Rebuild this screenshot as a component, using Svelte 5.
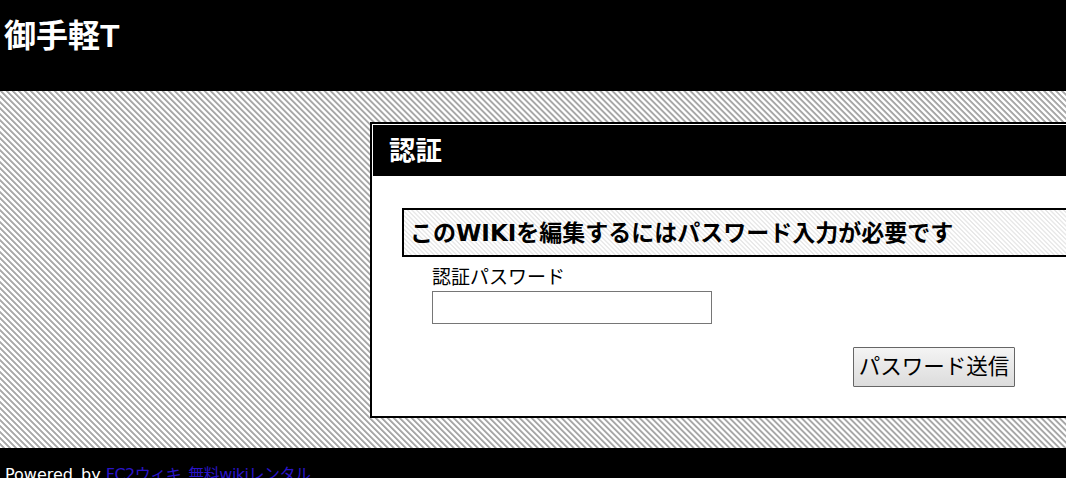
<script lang="ts">
	let password = $state('');
</script>

<div class="page">
	<header class="site-header">
		<h1>御手軽T</h1>
	</header>

	<main class="content">
		<section class="auth-box">
			<h2>認証</h2>
			<form class="auth-body" onsubmit={(e) => e.preventDefault()}>
				<h3>このWIKIを編集するにはパスワード入力が必要です</h3>
				<div class="field">
					<label for="auth-pass">認証パスワード</label>
					<input id="auth-pass" type="password" bind:value={password} />
				</div>
				<div class="actions">
					<button type="submit">パスワード送信</button>
				</div>
			</form>
		</section>
	</main>

	<footer class="site-footer">
		<span class="powered">Powered by</span>
		<a href="#top">FC2ウィキ</a>
		<a href="#top">無料wikiレンタル</a>
	</footer>
</div>

<style>
	:global(body) {
		overflow: hidden;
	}

	.page {
		width: 1066px;
		height: 478px;
		overflow: hidden;
		font-family: "Liberation Sans", "Noto Sans CJK JP", sans-serif;
		color: #000;
	}

	.site-header {
		height: 91px;
		background: #000;
		color: #fff;
		padding: 14px 0 0 4px;
		box-sizing: border-box;
	}

	h1 {
		margin: 0;
		font-size: 32px;
		line-height: 44px;
		font-weight: bold;
	}

	.content {
		height: 357px;
		box-sizing: border-box;
		padding: 31px 0 0 370px;
		background: repeating-linear-gradient(45deg, #fff 0, #fff 1.5px, #a8a8a8 2.3px, #a8a8a8 3.4px, #fff 4.24px);
		overflow: hidden;
	}

	.auth-box {
		width: 900px;
		height: 296px;
		box-sizing: border-box;
		border: 2px solid #000;
		padding: 1px;
		background: #fff;
	}

	h2 {
		margin: 0;
		height: 51px;
		background: #000;
		color: #fff;
		font-size: 26.5px;
		line-height: 53px;
		padding-left: 16px;
	}

	.auth-body {
		padding: 32px 0 0 29px;
	}

	h3 {
		margin: 0;
		height: 49px;
		box-sizing: border-box;
		border: 2px solid #000;
		padding-left: 6px;
		font-family: "DejaVu Sans", "Noto Sans CJK JP", sans-serif;
		font-size: 23px;
		line-height: 47px;
		background: repeating-linear-gradient(45deg, #fff 0, #fff 1.2px, #e8e8e8 1.8px, #e8e8e8 2.6px, #fff 3.2px);
	}

	.field {
		padding: 8px 0 0 30px;
	}

	label {
		display: block;
		font-size: 19px;
		line-height: 26px;
	}

	input {
		display: block;
		width: 280px;
		height: 33px;
		box-sizing: border-box;
		border: 1px solid #767676;
		padding: 0 4px;
		background: #fff;
		margin: 0;
	}

	.actions {
		padding: 23px 0 0 451px;
	}

	button {
		display: block;
		width: 162px;
		height: 40px;
		box-sizing: border-box;
		border: 1px solid #666;
		border-radius: 1px;
		background: linear-gradient(#f4f4f4, #dcdcdc);
		font-family: inherit;
		font-size: 21.5px;
		color: #000;
		padding: 0 0 5px;
	}

	.site-footer {
		display: flex;
		gap: 5px;
		height: 30px;
		background: #000;
		color: #fff;
		padding: 17px 0 0 5px;
		box-sizing: border-box;
		font-family: "DejaVu Sans", "Noto Sans CJK JP", sans-serif;
		font-size: 16px;
		line-height: 20px;
		white-space: nowrap;
	}

	.powered {
		word-spacing: 3px;
	}

	.site-footer a {
		color: #2a14c8;
		text-decoration: none;
		letter-spacing: -0.5px;
	}

	.site-footer a + a {
		margin-left: 2px;
	}
</style>
